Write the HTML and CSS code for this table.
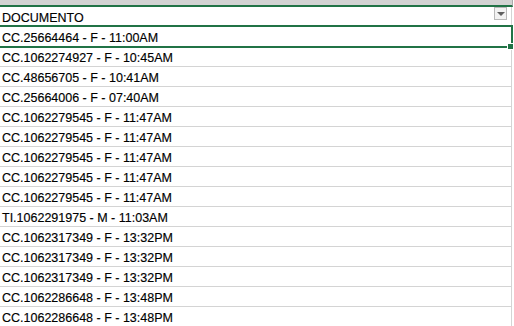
FILE: index.html
```html
<!DOCTYPE html>
<html lang="es">

<head>
    <meta charset="UTF-8">
    <meta name="viewport" content="width=device-width, initial-scale=1.0">
    <title>Documentos</title>
    <link rel="stylesheet" href="styles.css">
</head>

<body>
    <div class="col-header"></div>

    <div class="sheet">
        <div class="cell head">
            <span>DOCUMENTO</span>
            <span class="filter-btn"></span>
        </div>
        <div class="cell">CC.25664464 - F - 11:00AM</div>
        <div class="cell">CC.1062274927 - F - 10:45AM</div>
        <div class="cell">CC.48656705 - F - 10:41AM</div>
        <div class="cell">CC.25664006 - F - 07:40AM</div>
        <div class="cell">CC.1062279545 - F - 11:47AM</div>
        <div class="cell">CC.1062279545 - F - 11:47AM</div>
        <div class="cell">CC.1062279545 - F - 11:47AM</div>
        <div class="cell">CC.1062279545 - F - 11:47AM</div>
        <div class="cell">CC.1062279545 - F - 11:47AM</div>
        <div class="cell">TI.1062291975 - M - 11:03AM</div>
        <div class="cell">CC.1062317349 - F - 13:32PM</div>
        <div class="cell">CC.1062317349 - F - 13:32PM</div>
        <div class="cell">CC.1062317349 - F - 13:32PM</div>
        <div class="cell">CC.1062286648 - F - 13:48PM</div>
        <div class="cell">CC.1062286648 - F - 13:48PM</div>

        <!-- active cell outline -->
        <div class="selection">
            <span class="fill-handle"></span>
        </div>
    </div>
</body>

</html>
```

FILE: styles.css
```css
/* Sheet basics */
body {
    margin: 0;
    padding: 0;
    background: #fff;
    font-family: 'Liberation Sans', Arial, sans-serif;
    font-size: 12.5px;
    color: #000;
    overflow: hidden;
}

/* Column letter strip (selected column) */
.col-header {
    width: 512px;
    height: 5px;
    background-color: #d3d3d3;
    border-bottom: 2px solid #217346;
    border-right: 1px solid #ababab;
}

.sheet {
    position: relative;
    width: 512px;
}

.cell {
    width: 512px;
    height: 20px;
    box-sizing: border-box;
    padding: 3px 0 0 2px;
    line-height: 16px;
    white-space: nowrap;
    border-bottom: 1px solid #d4d4d4;
    border-right: 1px solid #d4d4d4;
    -webkit-text-stroke: 0.15px #000;
}

.cell.head {
    display: flex;
    align-items: flex-start;
}

/* Autofilter dropdown */
.filter-btn {
    margin: -3px 4px 0 auto;
    width: 13px;
    height: 13px;
    box-sizing: border-box;
    border: 1px solid #b9b9b9;
    background-color: #f2f2f2;
    position: relative;
}

.filter-btn::after {
    content: '';
    position: absolute;
    left: 2px;
    top: 4px;
    border-left: 4px solid transparent;
    border-right: 4px solid transparent;
    border-top: 4px solid #5f5f5f;
}

.selection {
    position: absolute;
    top: 18px;
    left: -3px;
    width: 516px;
    height: 23px;
    box-sizing: border-box;
    border: 2px solid #217346;
}

.fill-handle {
    position: absolute;
    right: -3px;
    bottom: -4px;
    width: 5px;
    height: 5px;
    background-color: #217346;
    border: 1px solid #fff;
}
```
